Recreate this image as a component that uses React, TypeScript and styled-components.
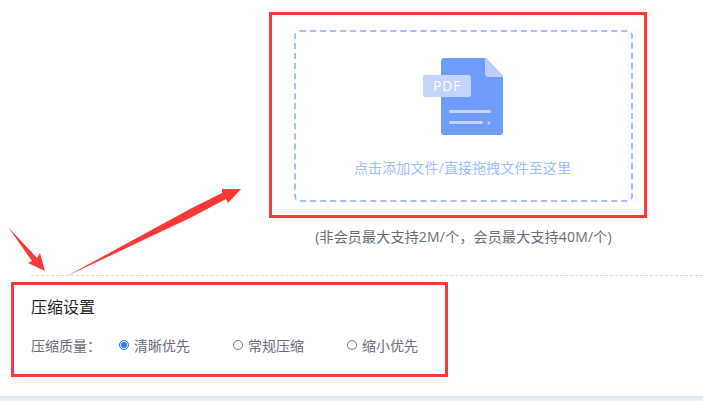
import React from 'react';
import styled, { createGlobalStyle } from 'styled-components';

const GlobalStyle = createGlobalStyle`
    html, body {
        margin: 0;
        padding: 0;
        background: #fff;
    }
    body {
        font-family: "Open Sans", "Noto Sans CJK SC", sans-serif;
    }
`

const Page = styled.div`
    position: relative;
    width: 703px;
    height: 401px;
    overflow: hidden;
    display: flex;
    flex-direction: column;
    background: #fff;
`

const UploadSection = styled.section`
    display: flex;
    flex-direction: column;
    align-items: center;
    padding: 12px 56px 0 269px;
    height: 275px;
    box-sizing: border-box;
`

const RedFrame = styled.div`
    border: 3px solid #fb3737;
    box-sizing: border-box;
`

const UploadFrame = styled(RedFrame)`
    width: 378px;
    height: 206px;
    padding: 15px 11px 13px 22px;
`

const DropZone = styled.div`
    height: 100%;
    box-sizing: border-box;
    border: 2px dashed #a3bdff;
    border-radius: 6px;
    display: flex;
    flex-direction: column;
    align-items: center;
    padding: 26px 2px 0 0;
`

const DropText = styled.div`
    margin-top: 23px;
    font-size: 14px;
    line-height: 20px;
    letter-spacing: 0.12px;
    color: #a2bbff;
    white-space: nowrap;
`

const Limit = styled.div`
    margin: 10px 0 0 11px;
    font-size: 14px;
    line-height: 18px;
    letter-spacing: 0.2px;
    color: #666c78;
    white-space: nowrap;
`

const Divider = styled.div`
    margin-left: 31px;
    border-top: 1px dashed #d9d9d9;
`

const SettingsFrame = styled(RedFrame)`
    margin: 6px 0 0 11px;
    width: 437px;
    height: 95px;
    padding: 11px 17px 0;
`

const SettingsTitle = styled.h3`
    margin: 0;
    font-size: 16px;
    line-height: 22px;
    font-weight: 400;
    color: #1f2329;
`

const QualityRow = styled.div`
    display: flex;
    align-items: center;
    margin-top: 17px;
    height: 20px;
`

const QualityLabel = styled.span`
    flex: 0 0 88px;
    font-size: 14px;
    color: #666c78;
    white-space: nowrap;
`

const RadioOption = styled.label`
    flex: 0 0 114px;
    display: flex;
    align-items: center;
    font-size: 14px;
    color: #666c78;
    white-space: nowrap;
    &:last-child {
        flex-basis: auto;
    }
`

const RadioDot = styled.span<{ $checked?: boolean }>`
    width: 10px;
    height: 10px;
    margin-right: 5px;
    border-radius: 50%;
    box-sizing: border-box;
    border: 1px solid ${p => (p.$checked ? '#2f7bf6' : '#777')};
    background: ${p => (p.$checked ? '#2f7bf6' : '#fff')};
    box-shadow: ${p => (p.$checked ? 'inset 0 0 0 1px #fff' : 'none')};
`

const BottomBand = styled.div`
    margin-top: auto;
    height: 5px;
    background: linear-gradient(#dde6f1, #ebf1f9);
`

const ArrowLayer = styled.svg`
    position: absolute;
    left: 0;
    top: 0;
    pointer-events: none;
`

const PdfIcon = () => (
    <svg width="80" height="77" viewBox="0 0 80 77">
        <path d="M18 3a3 3 0 0 1 3-3h42l17 18v56a3 3 0 0 1-3 3H21a3 3 0 0 1-3-3z" fill="#6f9bff" />
        <path d="M62 0h1l17 18v1H66a4 4 0 0 1-4-4z" fill="#bdd0ff" />
        <rect x="0" y="17" width="48" height="22" rx="2" fill="#c3d5ff" />
        <text x="10" y="33" fontFamily="'Open Sans', sans-serif" fontSize="14" letterSpacing="0.8" fill="#fff">PDF</text>
        <rect x="26" y="52" width="42" height="3" rx="1.5" fill="#c3d5ff" />
        <rect x="26" y="63" width="34" height="3" rx="1.5" fill="#c3d5ff" />
        <circle cx="66" cy="65" r="1.5" fill="#c3d5ff" />
    </svg>
)

const qualityOptions = ['清晰优先', '常规压缩', '缩小优先']

const App: React.FC = () => {
    return (
        <Page>
            <GlobalStyle />
            <UploadSection>
                <UploadFrame>
                    <DropZone>
                        <PdfIcon />
                        <DropText>点击添加文件/直接拖拽文件至这里</DropText>
                    </DropZone>
                </UploadFrame>
                <Limit>(非会员最大支持2M/个，会员最大支持40M/个)</Limit>
            </UploadSection>
            <Divider />
            <SettingsFrame>
                <SettingsTitle>压缩设置</SettingsTitle>
                <QualityRow>
                    <QualityLabel>压缩质量：</QualityLabel>
                    {qualityOptions.map((option, i) => (
                        <RadioOption key={option}>
                            <RadioDot $checked={i === 0} />
                            {option}
                        </RadioOption>
                    ))}
                </QualityRow>
            </SettingsFrame>
            <BottomBand />
            {/* annotation arrows drawn over the page */}
            <ArrowLayer width="703" height="401" viewBox="0 0 703 401">
                <path d="M8 227L37 258L40 253L45 271L28 263L32 261Z" fill="#fb3737" />
                <path d="M67 276L190 209L222 193L222 189L241 189L228 203L226 199L190 218Z" fill="#fb3737" />
            </ArrowLayer>
        </Page>
    )
}

export default App
